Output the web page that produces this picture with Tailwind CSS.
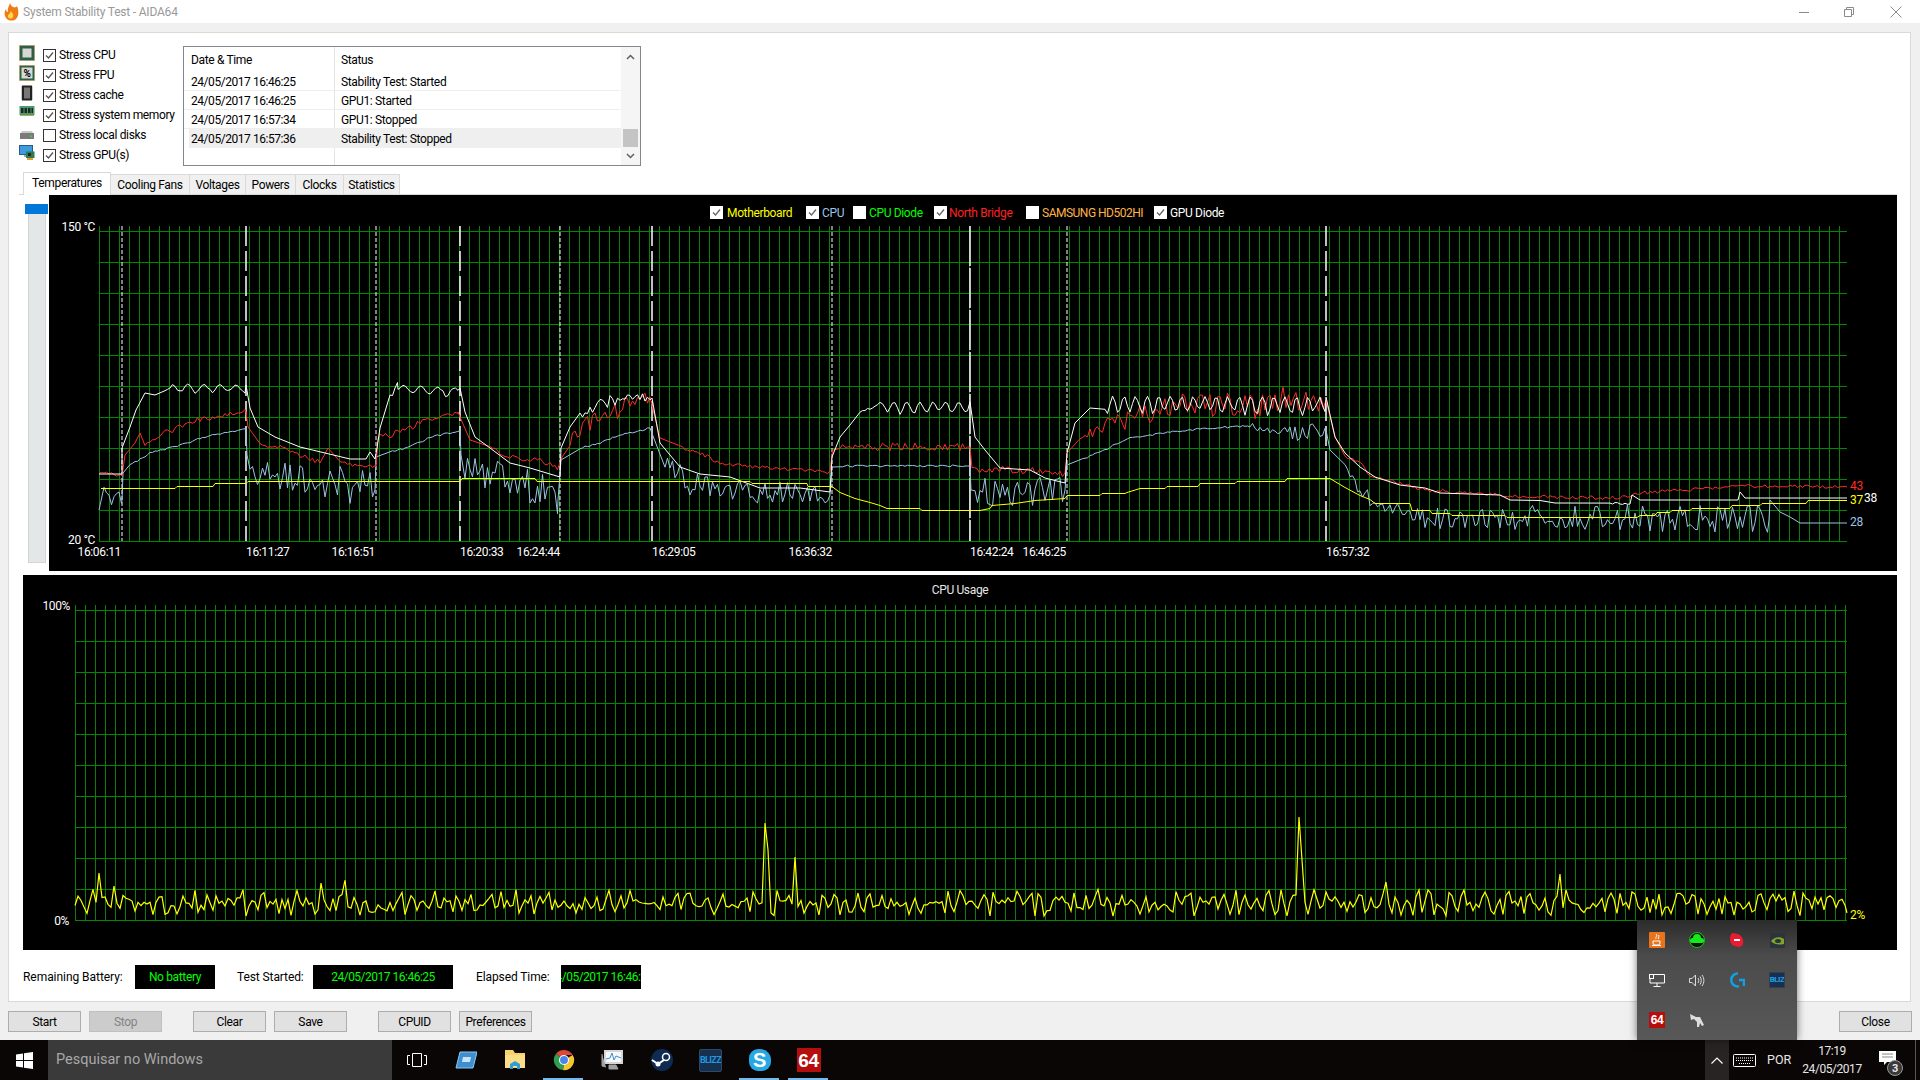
<!DOCTYPE html>
<html lang="en">
<head>
    <meta charset="UTF-8">
    <title>System Stability Test - AIDA64</title>
    <script src="https://cdn.jsdelivr.net/npm/@tailwindcss/browser@4"></script>
</head>
<body class="relative w-[1920px] h-[1080px] overflow-hidden flex flex-col bg-[#f0f0f0] text-[12px] leading-none tracking-[-0.35px] whitespace-nowrap text-black font-['Roboto',sans-serif]">

    <!-- Title bar -->
    <header class="h-[23px] bg-white flex items-center shrink-0">
        <svg class="w-4 h-[18px] ml-[3px] mr-[4px]" viewBox="0 0 16 18"><path d="M7 0C8 4 12 6 14 3c2 5 2 10-1 13-2 2-7 2-9 0C1 13 1 9 3 6c0 2 1 3 2 3C4 6 6 3 7 0z" fill="#f07a13"/><path d="M8 8c1 2 3 3 2 6-1 2-4 2-5 0-1-2 2-3 3-6z" fill="#ffd54a"/></svg>
        <span class="text-[#999999] tracking-[-0.2px]">System Stability Test - AIDA64</span>
        <div class="ml-auto flex items-center">
            <svg class="w-[10px] h-[10px] mr-[35px]" viewBox="0 0 10 10"><path d="M0 5.500h10" stroke="#8a8a8a"/></svg>
            <svg class="w-[10px] h-[10px] mr-[36px]" viewBox="0 0 10 10" fill="none" stroke="#8a8a8a"><path d="M.5 2.500h7v7h-7zM2.500 2.500v-2h7v7h-2"/></svg>
            <svg class="w-[12px] h-[12px] mr-[18px]" viewBox="0 0 12 12" stroke="#8a8a8a"><path d="M.5.5l11 11M11.500.5l-11 11"/></svg>
        </div>
    </header>

    <!-- Main panel -->
    <main class="mt-[9px] ml-[8px] w-[1903px] h-[970px] shrink-0 bg-white border border-[#d9d9d9] pt-[12px] pl-[10px] pr-[13px]">
        <!-- Stress options and log -->
        <div class="flex h-[127px]">
            <div class="w-[164px]">
                <label class="h-5 flex items-start">
                    <svg class="w-4 h-[16px]" viewBox="0 0 16 16"><rect x="0.500" y="0.500" width="15" height="15" fill="#2f5f48" stroke="#b9933f" stroke-dasharray="1 1"/><rect x="3.500" y="3.500" width="9" height="9" fill="#d6d9d6"/></svg>
                    <span class="ml-2 mt-[4px] w-[13px] h-[13px] border border-[#333333] flex items-center justify-center"><svg class="w-[9px] h-[9px]" viewBox="0 0 9 9" fill="none" stroke="#555555" stroke-width="1.300"><path d="M1 4.500l2.500 2.500L8 1.500"/></svg></span>
                    <span class="ml-[3px] mt-[4px]">Stress CPU</span>
                </label>
                <label class="h-5 flex items-start">
                    <svg class="w-4 h-[16px]" viewBox="0 0 16 16"><rect x="0.500" y="0.500" width="15" height="15" fill="#2f5f48" stroke="#b9933f" stroke-dasharray="1 1"/><rect x="2.500" y="2.500" width="11" height="11" fill="#d6d9d6"/><text x="8" y="12" text-anchor="middle" class="text-[10px] font-bold">%</text></svg>
                    <span class="ml-2 mt-[4px] w-[13px] h-[13px] border border-[#333333] flex items-center justify-center"><svg class="w-[9px] h-[9px]" viewBox="0 0 9 9" fill="none" stroke="#555555" stroke-width="1.300"><path d="M1 4.500l2.500 2.500L8 1.500"/></svg></span>
                    <span class="ml-[3px] mt-[4px]">Stress FPU</span>
                </label>
                <label class="h-5 flex items-start">
                    <svg class="w-4 h-[16px]" viewBox="0 0 16 16"><rect x="3" y="0.500" width="10" height="15" fill="#222222"/><rect x="5" y="2.500" width="6" height="11" fill="#777777"/><path d="M2 2h1M2 4h1M2 6h1M2 8h1M2 10h1M2 12h1M2 14h1M13 2h1M13 4h1M13 6h1M13 8h1M13 10h1M13 12h1M13 14h1" stroke="#999999"/></svg>
                    <span class="ml-2 mt-[4px] w-[13px] h-[13px] border border-[#333333] flex items-center justify-center"><svg class="w-[9px] h-[9px]" viewBox="0 0 9 9" fill="none" stroke="#555555" stroke-width="1.300"><path d="M1 4.500l2.500 2.500L8 1.500"/></svg></span>
                    <span class="ml-[3px] mt-[4px]">Stress cache</span>
                </label>
                <label class="h-5 flex items-start">
                    <svg class="w-4 h-[16px]" viewBox="0 0 16 16"><rect x="0.500" y="1" width="15" height="9" fill="#4d9a6e"/><path d="M2 3h2.500v5H2zM5.500 3H8v5H5.500zM9 3h2.500v5H9zM12.500 3H14v5h-1.500z" fill="#1c2a24"/><path d="M1 10.500h14" stroke="#c2a24a"/></svg>
                    <span class="ml-2 mt-[4px] w-[13px] h-[13px] border border-[#333333] flex items-center justify-center"><svg class="w-[9px] h-[9px]" viewBox="0 0 9 9" fill="none" stroke="#555555" stroke-width="1.300"><path d="M1 4.500l2.500 2.500L8 1.500"/></svg></span>
                    <span class="ml-[3px] mt-[4px]">Stress system memory</span>
                </label>
                <label class="h-5 flex items-start">
                    <svg class="w-4 h-[16px]" viewBox="0 0 16 16"><path d="M2 8l1-2h10l1 2z" fill="#c8c8c8"/><rect x="1" y="8" width="14" height="6" fill="#7b7b7b"/><rect x="11" y="10.500" width="2" height="1.500" fill="#39d353"/></svg>
                    <span class="ml-2 mt-[4px] w-[13px] h-[13px] border border-[#333333] bg-white"></span>
                    <span class="ml-[3px] mt-[4px]">Stress local disks</span>
                </label>
                <label class="h-5 flex items-start">
                    <svg class="w-4 h-[16px]" viewBox="0 0 16 16"><rect x="0.500" y="0.500" width="13" height="9" fill="#3d9be0" stroke="#2a5a86"/><path d="M5 10h4v2H5z" fill="#9aa8b4"/><rect x="7" y="6.500" width="8.500" height="6.500" fill="#2f7a4f"/><rect x="9" y="8" width="3" height="3" fill="#1b2b22"/><path d="M8 13h6v2H8z" fill="#e0a030"/></svg>
                    <span class="ml-2 mt-[4px] w-[13px] h-[13px] border border-[#333333] flex items-center justify-center"><svg class="w-[9px] h-[9px]" viewBox="0 0 9 9" fill="none" stroke="#555555" stroke-width="1.300"><path d="M1 4.500l2.500 2.500L8 1.500"/></svg></span>
                    <span class="ml-[3px] mt-[4px]">Stress GPU(s)</span>
                </label>
            </div>

            <!-- Log list -->
            <div class="mt-[1px] w-[458px] h-[120px] border border-[#828790] flex">
                <div class="flex-1 flex flex-col">
                    <div class="h-[25px] flex items-center">
                        <div class="w-[151px] h-full flex items-center pl-[7px] border-r border-[#e5e5e5]">Date &amp; Time</div>
                        <div class="pl-[6px]">Status</div>
                    </div>
                    <div class="h-[19px] flex items-center border-b border-[#eeeeee]">
                        <div class="w-[151px] h-full flex items-center pl-[7px] pt-[1px] border-r border-[#e5e5e5] tracking-[-0.45px]">24/05/2017 16:46:25</div>
                        <div class="pl-[6px] pt-[1px]">Stability Test: Started</div>
                    </div>
                    <div class="h-[19px] flex items-center border-b border-[#eeeeee]">
                        <div class="w-[151px] h-full flex items-center pl-[7px] pt-[1px] border-r border-[#e5e5e5] tracking-[-0.45px]">24/05/2017 16:46:25</div>
                        <div class="pl-[6px] pt-[1px]">GPU1: Started</div>
                    </div>
                    <div class="h-[19px] flex items-center border-b border-[#eeeeee]">
                        <div class="w-[151px] h-full flex items-center pl-[7px] pt-[1px] border-r border-[#e5e5e5] tracking-[-0.45px]">24/05/2017 16:57:34</div>
                        <div class="pl-[6px] pt-[1px]">GPU1: Stopped</div>
                    </div>
                    <div class="h-[19px] ml-[5px] flex items-center bg-[#efefef]">
                        <div class="w-[146px] pl-[2px] tracking-[-0.45px]">24/05/2017 16:57:36</div>
                        <div class="pl-[6px]">Stability Test: Stopped</div>
                    </div>
                    <div class="flex-1 ml-[150px] border-l border-[#e5e5e5]"></div>
                </div>
                <div class="w-[19px] bg-[#f5f5f5] flex flex-col items-center">
                    <div class="h-[19px] flex items-center justify-center"><svg class="w-[9px] h-[6px]" viewBox="0 0 9 6" fill="none" stroke="#606060" stroke-width="1.500"><path d="M1 5l3.500-3.500L8 5"/></svg></div>
                    <div class="mt-auto w-[15px] h-[18px] bg-[#c4c4c4]"></div>
                    <div class="h-[18px] flex items-center justify-center"><svg class="w-[9px] h-[6px]" viewBox="0 0 9 6" fill="none" stroke="#606060" stroke-width="1.500"><path d="M1 1l3.500 3.500L8 1"/></svg></div>
                </div>
            </div>
        </div>

        <!-- Tabs -->
        <div class="h-[23px] flex items-end pl-[4px] border-b border-[#d9d9d9]">
            <div class="w-[88px] h-[23px] -mb-[1px] pb-[2px] bg-white border border-b-0 border-[#d9d9d9] flex items-center justify-center">Temperatures</div>
            <div class="w-[79px] h-[20px] bg-[#f0f0f0] border border-b-0 border-l-0 border-[#d9d9d9] flex items-center justify-center">Cooling Fans</div>
            <div class="w-[56px] h-[20px] bg-[#f0f0f0] border border-b-0 border-l-0 border-[#d9d9d9] flex items-center justify-center">Voltages</div>
            <div class="w-[50px] h-[20px] bg-[#f0f0f0] border border-b-0 border-l-0 border-[#d9d9d9] flex items-center justify-center">Powers</div>
            <div class="w-[48px] h-[20px] bg-[#f0f0f0] border border-b-0 border-l-0 border-[#d9d9d9] flex items-center justify-center">Clocks</div>
            <div class="w-[56px] h-[20px] bg-[#f0f0f0] border border-b-0 border-l-0 border-[#d9d9d9] flex items-center justify-center">Statistics</div>
        </div>

        <!-- Temperature chart -->
        <div class="h-[376px] flex">
            <div class="ml-[6px] w-[23px] mr-[1px] pt-[9px] flex flex-col items-center">
                <div class="w-[23px] h-[10px] bg-[#0078d7] shrink-0"></div>
                <div class="w-[18px] h-[349px] bg-[#e4e7e8] border-b border-x border-[#d4d4d4]"></div>
            </div>
            <div class="relative flex-1 bg-black">
                <svg id="temp-chart" class="absolute inset-0 w-full h-full" viewBox="49 195 1848 376"></svg>
                <!-- Legend -->
                <div class="relative flex pl-[661px] pt-[11px]">
                    <div class="w-[96px] flex items-center text-[#ffff00]"><span class="w-[13px] h-[13px] bg-white mr-[4px] flex items-center justify-center"><svg class="w-[9px] h-[9px]" viewBox="0 0 9 9" fill="none" stroke="#666666" stroke-width="1.300"><path d="M1 4.500l2.500 2.500L8 1.500"/></svg></span>Motherboard</div>
                    <div class="w-[47px] flex items-center text-[#9dc3e6]"><span class="w-[13px] h-[13px] bg-white mr-[3px] flex items-center justify-center"><svg class="w-[9px] h-[9px]" viewBox="0 0 9 9" fill="none" stroke="#666666" stroke-width="1.300"><path d="M1 4.500l2.500 2.500L8 1.500"/></svg></span>CPU</div>
                    <div class="w-[81px] flex items-center text-[#00ff00]"><span class="w-[13px] h-[13px] bg-white mr-[3px]"></span>CPU Diode</div>
                    <div class="w-[92px] flex items-center text-[#ff2020]"><span class="w-[13px] h-[13px] bg-white mr-[2px] flex items-center justify-center"><svg class="w-[9px] h-[9px]" viewBox="0 0 9 9" fill="none" stroke="#666666" stroke-width="1.300"><path d="M1 4.500l2.500 2.500L8 1.500"/></svg></span>North Bridge</div>
                    <div class="w-[128px] flex items-center text-[#ffb347] tracking-[-0.5px]"><span class="w-[13px] h-[13px] bg-white mr-[3px]"></span>SAMSUNG HD502HI</div>
                    <div class="flex items-center text-white"><span class="w-[13px] h-[13px] bg-white mr-[3px] flex items-center justify-center"><svg class="w-[9px] h-[9px]" viewBox="0 0 9 9" fill="none" stroke="#666666" stroke-width="1.300"><path d="M1 4.500l2.500 2.500L8 1.500"/></svg></span>GPU Diode</div>
                </div>
            </div>
        </div>

        <!-- CPU usage chart -->
        <div class="mt-[4px] ml-[4px] h-[375px] bg-black">
            <svg id="usage-chart" class="w-full h-full" viewBox="23 575 1874 375"></svg>
        </div>

        <!-- Battery and time -->
        <div class="mt-[15px] ml-[4px] h-[24px] flex items-center">
            <span class="w-[112px] tracking-[-0.05px]">Remaining Battery:</span>
            <div class="w-[80px] h-full bg-black text-[#00ff00] flex items-center justify-center">No battery</div>
            <span class="ml-[22px] w-[76px] tracking-[-0.1px]">Test Started:</span>
            <div class="w-[140px] h-full bg-black text-[#00ff00] flex items-center justify-center tracking-[-0.5px]">24/05/2017 16:46:25</div>
            <span class="ml-[23px] w-[85px] tracking-[-0.1px]">Elapsed Time:</span>
            <div class="w-[80px] h-full bg-black text-[#00ff00] flex items-center justify-center overflow-hidden tracking-[-0.5px]"><span class="shrink-0">24/05/2017 16:46:25</span></div>
        </div>
    </main>

    <!-- Buttons -->
    <div class="h-[38px] shrink-0 pt-[9px] px-[8px] flex items-start">
        <button class="w-[73px] h-[21px] bg-[#e1e1e1] border border-[#adadad]">Start</button>
        <button class="ml-[8px] w-[73px] h-[21px] bg-[#cccccc] border border-[#bfbfbf] text-[#838383]">Stop</button>
        <button class="ml-[31px] w-[73px] h-[21px] bg-[#e1e1e1] border border-[#adadad]">Clear</button>
        <button class="ml-[8px] w-[73px] h-[21px] bg-[#e1e1e1] border border-[#adadad]">Save</button>
        <button class="ml-[31px] w-[73px] h-[21px] bg-[#e1e1e1] border border-[#adadad]">CPUID</button>
        <button class="ml-[8px] w-[73px] h-[21px] bg-[#e1e1e1] border border-[#adadad]">Preferences</button>
        <button class="ml-auto w-[73px] h-[21px] bg-[#e1e1e1] border border-[#adadad]">Close</button>
    </div>

    <!-- Taskbar -->
    <footer class="h-[40px] shrink-0 bg-[#0b0606] flex items-stretch text-white">
        <div class="w-[48px] flex items-center justify-center">
            <svg class="w-[17px] h-[17px]" viewBox="0 0 17 17" fill="#ffffff"><path d="M0 2.500L7 1.500V8H0zM8 1.300L17 0v8H8zM0 9h7v6.500L0 14.500zM8 9h9v8l-9-1.300z"/></svg>
        </div>
        <div class="w-[344px] bg-[#3a3a3a] flex items-center pl-[8px] pt-[1px] text-[14.500px] tracking-normal text-[#a8a8a8]">Pesquisar no Windows</div>
        <div class="w-[49px] flex items-center justify-center">
            <svg class="w-[20px] h-[14px]" viewBox="0 0 20 14" fill="none" stroke="#ffffff"><path d="M5.500.5h9v13h-9zM3 2.500H.5v9H3M17 2.500h2.500v9H17"/></svg>
        </div>
        <div class="w-[49px] flex items-center justify-center">
            <svg class="w-[22px] h-[18px]" viewBox="0 0 22 18"><path d="M5 1h17l-4 16H1z" fill="#3f8fd0" stroke="#8cc8f0"/><path d="M8 6h8l-1 5H7z" fill="#c8e4f8"/></svg>
        </div>
        <div class="w-[49px] flex items-center justify-center">
            <svg class="w-[22px] h-[22px]" viewBox="0 0 22 22"><path d="M1 1h8l2 3h10v14H1z" fill="#f7d070"/><path d="M1 6h20v13H1z" fill="#fbdd88"/><path d="M6 20v-5l5-3 5 3v5h-3v-3H9v3z" fill="#2e9ed8"/></svg>
        </div>
        <div class="relative w-[49px] flex items-center justify-center">
            <svg class="w-[22px] h-[22px]" viewBox="0 0 24 24"><path d="M12 12L3.300 5.300A11 11 0 0 1 21.500 6.500H12z" fill="#e0453a"/><path d="M12 12L21.500 6.500A11 11 0 0 1 11 23z" fill="#f7c52e"/><path d="M12 12L11 23A11 11 0 0 1 3.300 5.300z" fill="#2f9e4f"/><circle cx="12" cy="12" r="5.500" fill="#ffffff"/><circle cx="12" cy="12" r="4.300" fill="#4a86e8"/></svg>
            <span class="absolute bottom-0 left-[4px] w-[40px] h-[2px] bg-[#76b9ed]"></span>
        </div>
        <div class="w-[49px] flex items-center justify-center">
            <svg class="w-[23px] h-[22px]" viewBox="0 0 23 22"><rect x="3" y="1" width="19" height="14" fill="#d5d5d5"/><rect x="5" y="3" width="15" height="10" fill="#f4f8fb"/><path d="M5 10l4-1 2-5 2 7 2-4 5 2" fill="none" stroke="#3f8fd0"/><path d="M1 5v12l4 1M8 16h7l2 4H8z" fill="#a0a0a0" stroke="#a0a0a0"/></svg>
        </div>
        <div class="w-[49px] flex items-center justify-center">
            <svg class="w-[22px] h-[22px]" viewBox="0 0 22 22"><circle cx="11" cy="11" r="11" fill="#0f2b52"/><circle cx="15" cy="8" r="3.500" fill="none" stroke="#ffffff" stroke-width="1.500"/><circle cx="7" cy="15" r="2.500" fill="#ffffff"/><path d="M1 11l6 4 6-4" fill="none" stroke="#ffffff" stroke-width="2"/></svg>
        </div>
        <div class="w-[49px] flex items-center justify-center">
            <div class="w-[23px] h-[23px] rounded-[2px] bg-[#17304f] border border-[#2a4a6a] flex items-center justify-center overflow-hidden text-[9px] tracking-[-0.6px] text-[#1f9ae0] font-bold">BLIZZ</div>
        </div>
        <div class="relative w-[49px] flex items-center justify-center">
            <div class="relative w-[22px] h-[22px]">
                <div class="absolute inset-0 bg-[#27a8e6] rounded-[9px] rounded-tr-[11px]"></div>
                <div class="relative w-full h-full flex items-center justify-center text-[20px] font-bold text-white font-['Liberation_Sans',sans-serif]">S</div>
            </div>
            <span class="absolute bottom-0 left-[4px] w-[40px] h-[2px] bg-[#76b9ed]"></span>
        </div>
        <div class="relative w-[49px] flex items-center justify-center">
            <div class="w-[24px] h-[24px] bg-[#b60d0d] flex items-center justify-center text-[19px] font-bold text-white font-['Liberation_Sans',sans-serif]">64</div>
            <span class="absolute bottom-0 left-[4px] w-[40px] h-[2px] bg-[#76b9ed]"></span>
        </div>

        <div class="ml-auto flex items-stretch">
            <div class="w-[24px] bg-[#292424] flex items-center justify-center">
                <svg class="w-[12px] h-[7px]" viewBox="0 0 12 7" fill="none" stroke="#ffffff" stroke-width="1.200"><path d="M.5 6.500L6 1l5.500 5.500"/></svg>
            </div>
            <div class="w-[38px] pl-[4px] flex items-center">
                <svg class="w-[23px] h-[13px]" viewBox="0 0 23 13" fill="none" stroke="#ffffff"><rect x=".5" y=".5" width="22" height="12" rx="1"/><path d="M3 4h17M3 6.500h17M6 9.500h11" stroke-dasharray="1 1"/></svg>
            </div>
            <div class="w-[38px] flex items-center text-[12.500px] tracking-normal text-[#e6e6e6]">POR</div>
            <div class="w-[54px] flex flex-col items-center justify-center gap-[6px] text-[#e6e6e6] tracking-[-0.45px]">
                <span>17:19</span>
                <span>24/05/2017</span>
            </div>
            <div class="relative w-[56px] flex items-center justify-center">
                <svg class="w-[17px] h-[15px] -mt-[4px]" viewBox="0 0 17 15"><path d="M0 0h17v11H8l-3 3v-3H0z" fill="#ffffff"/><path d="M3 3h11M3 6h11" stroke="#888888"/></svg>
                <span class="absolute left-[28px] top-[20px] w-[16px] h-[16px] rounded-full bg-[#3a3a3a] border border-[#999999] flex items-center justify-center text-[11px] font-bold text-[#e6e6e6]">3</span>
            </div>
            <div class="w-[5px] border-l border-[#555555]"></div>
        </div>
    </footer>

    <!-- Notification area flyout -->
    <div class="absolute left-[1637px] top-[920px] w-[160px] h-[120px] grid grid-cols-4 grid-rows-3 bg-linear-to-b from-[#2c2c2c] via-[#4b4b4b] via-30% to-[#585858] shadow-[0_0_8px_rgba(0,0,0,0.55)]">
        <div class="flex items-center justify-center">
            <svg class="w-[16px] h-[16px]" viewBox="0 0 16 16"><rect width="16" height="16" rx="1" fill="#e8741c"/><path d="M4 9h7v2a2 2 0 0 1-2 2H6a2 2 0 0 1-2-2zM3 13.500h9M7 2c2 2-1 3 0 5M9.500 3c1.500 1.500-1 2 0 4" fill="none" stroke="#ffffff"/></svg>
        </div>
        <div class="flex items-center justify-center">
            <svg class="w-[16px] h-[16px]" viewBox="0 0 16 16"><circle cx="8" cy="8" r="7.500" fill="#061206" stroke="#19c219"/><path d="M3 11a2.500 2.500 0 0 1 1-5 4 4 0 0 1 8 0 2.500 2.500 0 0 1 1 5z" fill="#16e81c"/></svg>
        </div>
        <div class="flex items-center justify-center">
            <svg class="w-[14px] h-[14px]" viewBox="0 0 14 14"><path d="M3 0c2 0 3 1 4 1s5 1 6 6c1 4-1 7-4 7-2 0-3-1-4-1S1 12 0 7C0 3 1 0 3 0z" fill="#ec1c30"/><path d="M4 6h6v2H4z" fill="#ffffff"/></svg>
        </div>
        <div class="flex items-center justify-center">
            <svg class="w-[15px] h-[15px]" viewBox="0 0 15 15"><rect width="15" height="15" rx="1" fill="#2b333c"/><path d="M1 8c3-4 9-5 13-2v5C10 12 4 12 1 8z" fill="#7fa62a"/><ellipse cx="8" cy="8" rx="3" ry="2" fill="#2b333c"/></svg>
        </div>
        <div class="flex items-center justify-center">
            <svg class="w-[16px] h-[13px]" viewBox="0 0 16 13" fill="none" stroke="#ffffff"><path d="M3 .5h12.500v8.500H1V5M8 9v3M4.500 12.500h7"/><rect x=".5" y=".5" width="4" height="4"/></svg>
        </div>
        <div class="flex items-center justify-center">
            <svg class="w-[16px] h-[13px]" viewBox="0 0 16 13" fill="none" stroke="#dddddd"><path d="M.5 4.500h2.500L6.500 1v11L3 8.500H.5z"/><path d="M9 4c1 1.500 1 3.500 0 5M11 2.500c1.700 2.500 1.700 5.500 0 8M13 1c2.500 3.500 2.500 7.500 0 11"/></svg>
        </div>
        <div class="flex items-center justify-center">
            <svg class="w-[16px] h-[16px]" viewBox="0 0 16 16" fill="none" stroke="#0fa0e6" stroke-width="2.500"><path d="M9 1.500A6.500 6.500 0 1 0 8.500 14.500a5 5 0 0 0 1.500-.5M10 8h5v6"/></svg>
        </div>
        <div class="flex items-center justify-center">
            <div class="w-[16px] h-[16px] rounded-[1px] bg-[#17304f] border border-[#30404f] flex items-center justify-center overflow-hidden text-[8px] tracking-[-0.5px] text-[#1fa0ea] font-bold">BLIZ</div>
        </div>
        <div class="flex items-center justify-center">
            <div class="w-[16px] h-[16px] bg-[#b60d0d] flex items-center justify-center text-[12px] font-bold text-white font-['Liberation_Sans',sans-serif]">64</div>
        </div>
        <div class="flex items-center justify-center">
            <svg class="w-[14px] h-[13px]" viewBox="0 0 14 13"><path d="M0 0l6 3 4 0 4 8-2 1-2-3-1 4-2 0 0-5-3-3-3 1z" fill="#dddddd"/></svg>
        </div>
    </div>

    <script>
        // deterministic noise so that the picture stays the same between runs
        let seed = 1234;
        function rnd() {
            seed = (seed * 16807) % 2147483647;
            return seed / 2147483647;
        }

        // keypoints are [x, y, noise, wavelength], noise applies up to the next keypoint
        function buildLine(points) {
            const out = [];
            for (let i = 0; i < points.length - 1; i++) {
                const [x0, y0, amp, wave] = points[i];
                const [x1, y1] = points[i + 1];
                const step = amp ? 2.5 : (x1 - x0 || 1);
                for (let x = x0; x < x1 || x === x0; x += step) {
                    const t = x1 === x0 ? 0 : (x - x0) / (x1 - x0);
                    let y = y0 + (y1 - y0) * t;
                    if (amp && wave) y += amp * (0.5 + 0.5 * Math.sin(x * 6.283 / wave)) * (0.7 + rnd() * 0.5);
                    else if (amp) y += amp * (rnd() * 2 - 1);
                    out.push(x.toFixed(1) + ',' + y.toFixed(1));
                }
            }
            const last = points[points.length - 1];
            out.push(last[0] + ',' + last[1]);
            return out.join(' ');
        }

        const white = [[99,474],[122,474],[122,448],[130,427],[136,410],[145,393],[155,395],[165,390,3],[175,384,8,16],[246,385],[250,408],[258,427],[275,437],[300,447],[325,453],[350,459],[366,459],[370,452],[375,459],[377,448],[380,428],[390,397,4],[398,385,8,17],[460,388],[465,412],[475,437],[490,448],[510,463],[530,468],[560,477],[561,448],[570,427],[580,415,5],[600,403,6],[630,397,4],[652,398],[660,443],[680,467],[700,474],[730,477],[760,488],[800,488],[830,492],[832,457],[840,437],[850,425],[860,413,2],[880,402,11,13],[970,402],[975,437],[985,450],[1000,468],[1030,470],[1045,478],[1065,483],[1067,453],[1075,423],[1090,408],[1105,396,16,11.5],[1326,397],[1335,437],[1345,453],[1360,467],[1375,477],[1400,485],[1425,488],[1440,493],[1500,495],[1510,500],[1540,500.5],[1555,503],[1610,503,1],[1630,504],[1632,495],[1640,500],[1738,500],[1740,492],[1745,498],[1847,498]];

        const red = [[99,473,2],[122,476],[125,455],[135,443],[140,433],[145,446,2],[165,433,3],[190,422,3],[215,417,2],[240,412,3],[246,412],[248,427],[260,445,2],[280,447,2],[300,455,3],[320,463],[328,448],[340,463,2],[376,467],[378,437,5],[390,435,3],[410,428,3],[425,420,2],[440,417,2],[458,412],[460,417],[470,440],[490,448,2],[510,457,3],[540,460,3],[558,468],[562,457],[570,440,8],[580,427,10],[600,417,10],[630,403,6],[650,397],[660,438],[680,447,2],[700,453,2],[720,463,2],[760,467,2],[800,470,2],[830,473,3],[833,450],[840,447,4],[970,447],[972,470,3],[1000,470,4],[1065,473],[1067,453],[1080,440,5],[1100,427,9],[1130,420,12],[1170,407,13],[1250,404,15],[1280,404],[1283,387],[1286,404,16],[1326,400],[1335,437],[1345,457,2],[1360,462,2],[1370,477,2],[1400,483,2],[1425,490,2],[1500,495,2],[1520,496,2],[1620,498,2],[1640,493,2],[1700,489,1.5],[1740,486,1.5],[1847,487]];

        const blue = [[99,510],[104,495,8],[122,500],[123,473],[130,465,1],[150,453,1],[170,448,1],[190,442,1],[210,435,1],[246,429],[247,455],[250,470,14],[300,480,19],[375,490],[376,457],[390,452,1],[410,447,1],[430,437,1],[460,431],[461,455],[465,470,15],[520,480,18],[558,500],[561,460],[580,448,1],[600,443,1],[620,435,1],[650,428],[653,436],[665,463,12],[690,485,12],[760,492,11],[830,495],[832,467],[840,466,1],[970,466],[971,490],[975,490,16],[1065,490],[1067,465],[1080,460,1],[1100,452,1],[1130,438,1],[1170,432,1],[1210,428,1],[1250,426,4],[1290,432,9],[1326,430],[1330,450],[1345,470,10],[1360,493,9],[1380,507,6],[1400,508,5],[1415,518,12],[1530,518,14],[1700,518,15],[1769,520],[1770,500],[1780,512],[1790,517],[1800,523],[1847,523]];

        const yellow = [[101,488],[175,488],[177,486],[213,486],[215,483],[246,483],[248,481],[460,481],[462,478],[535,478],[537,481],[750,481],[752,483],[807,483],[808,486],[832,486],[840,492],[855,498],[870,502],[880,505],[887,508],[920,508],[922,510],[980,510],[990,508],[992,505],[1015,503],[1035,500],[1065,498],[1067,495],[1100,495],[1102,493],[1125,493],[1127,492],[1140,488],[1165,488],[1167,486],[1198,486],[1200,483],[1235,483],[1237,481],[1285,481],[1287,478],[1330,478],[1345,487],[1360,495],[1370,499],[1375,503],[1410,503],[1412,510],[1430,510],[1432,513],[1450,513],[1452,515],[1505,515],[1507,517],[1637,517],[1640,515],[1655,515],[1657,512],[1670,512],[1672,510],[1690,510],[1692,508],[1730,508],[1732,505],[1760,505],[1762,503],[1806,503],[1808,500],[1847,500]];

        function gridLines(left, right, top, bottom, firstRow, rows) {
            let s = '';
            for (let x = left; x <= right; x += 10) {
                s += `<line x1="${x}" x2="${x}" y1="${top}" y2="${bottom}" stroke="#0a800a" shape-rendering="crispEdges"/>`;
            }
            for (let i = 0; i < rows; i++) {
                const y = firstRow + i * 31;
                s += `<line x1="${left}" x2="${right}" y1="${y}" y2="${y}" stroke="#008800" shape-rendering="crispEdges"/>`;
            }
            return s;
        }

        function label(x, y, text, fill, anchor) {
            return `<text x="${x}" y="${y}" fill="${fill}" text-anchor="${anchor || 'start'}" dominant-baseline="middle">${text}</text>`;
        }

        // temperature chart
        let temp = gridLines(99, 1847, 226, 541, 231, 11);
        const markers = [[122,'4 2',1],[246,'20 5',1.5],[376,'4 2',1],[460,'20 5',1.5],[560,'4 2',1],[652,'20 5',1.5],[832,'4 2',1],[970,'40 2',1.5],[1067,'4 2',1],[1326,'20 5',1.5]];
        markers.forEach(m => {
            temp += `<line x1="${m[0]}" x2="${m[0]}" y1="226" y2="541" stroke="#ffffff" stroke-width="${m[2]}" stroke-dasharray="${m[1]}"/>`;
        });
        temp += `<polyline points="${buildLine(blue)}" fill="none" stroke="#9dc3e6"/>`;
        temp += `<polyline points="${buildLine(red)}" fill="none" stroke="#ff2a2a"/>`;
        temp += `<polyline points="${buildLine(white)}" fill="none" stroke="#ffffff"/>`;
        temp += `<polyline points="${buildLine(yellow)}" fill="none" stroke="#ffff00" transform="translate(0 0.5)"/>`;
        temp += label(95, 228, '150 °C', '#ffffff', 'end') + label(95, 541, '20 °C', '#ffffff', 'end');
        [[121,'16:06:11','end'],[246,'16:11:27'],[375,'16:16:51','end'],[460,'16:20:33'],[560,'16:24:44','end'],[652,'16:29:05'],[832,'16:36:32','end'],[970,'16:42:24'],[1066,'16:46:25','end'],[1326,'16:57:32']].forEach(t => {
            temp += label(t[0], 553, t[1], '#ffffff', t[2]);
        });
        temp += label(1850, 487, '43', '#ff2a2a') + label(1850, 501, '37', '#ffff00') + label(1864, 499, '38', '#ffffff') + label(1850, 523, '28', '#9dc3e6');
        document.getElementById('temp-chart').innerHTML = temp;

        // cpu usage chart
        const spikes = {98:873, 114:886, 320:883, 346:880, 764:823, 767:850, 794:857, 1300:817, 1303:860, 1386:882, 1561:874};
        const usage = [];
        for (let x = 75; x < 1847; x += 3) {
            let y = 903 - 6 * Math.sin(x * 0.55 + rnd() * 2) + (rnd() * 2 - 1) * 8;
            for (const sx in spikes) {
                if (Math.abs(x - sx) < 1.6) y = spikes[sx];
            }
            usage.push(x + ',' + Math.min(y, 916).toFixed(1));
        }
        usage.push('1847,913');
        let cpu = gridLines(75, 1847, 605, 920, 610, 11);
        cpu += `<polyline points="${usage.join(' ')}" fill="none" stroke="#ffff00" stroke-width="1.200"/>`;
        cpu += label(960, 591, 'CPU Usage', '#e6e6e6', 'middle') + label(70, 607, '100%', '#ffffff', 'end') + label(69, 922, '0%', '#ffffff', 'end') + label(1850, 916, '2%', '#ffff00');
        document.getElementById('usage-chart').innerHTML = cpu;
    </script>
</body>
</html>
